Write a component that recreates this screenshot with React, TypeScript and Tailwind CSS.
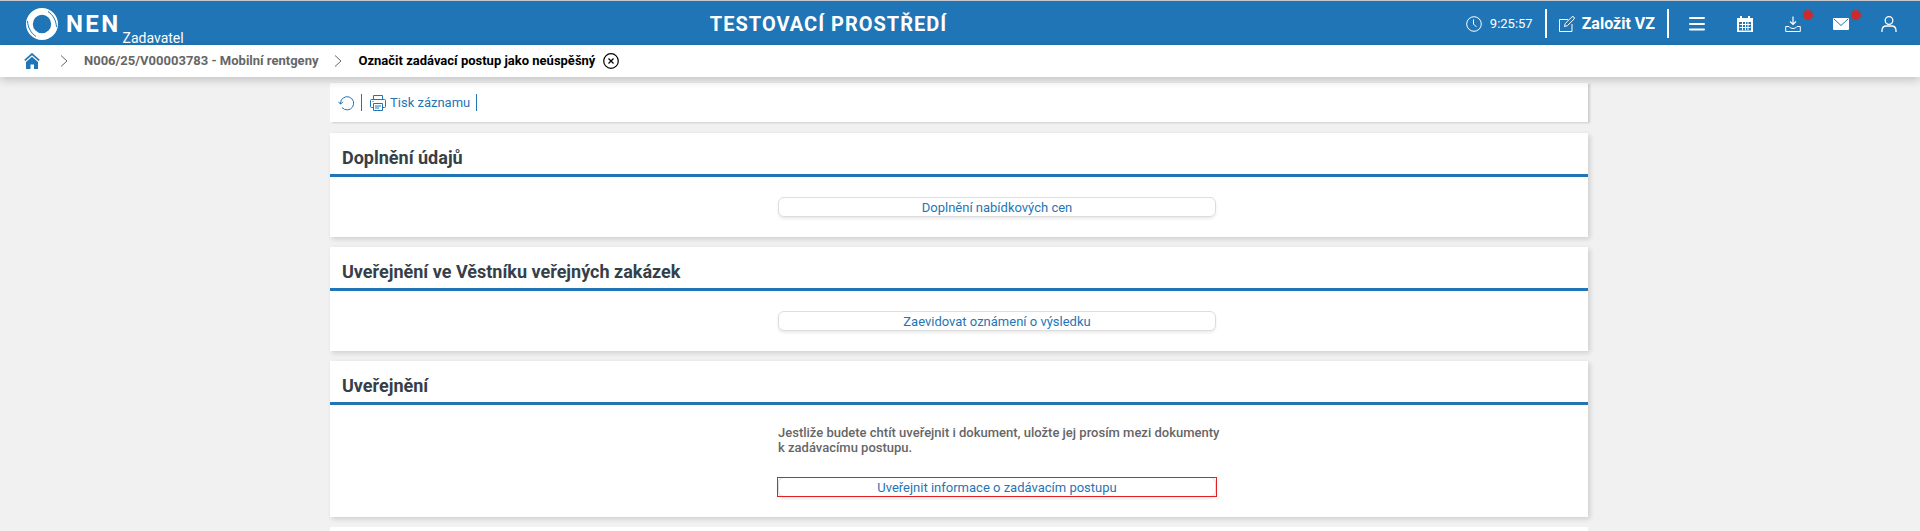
import React from 'react';

interface IconProps {
  className?: string;
}

function LogoIcon() {
  return (
    <svg viewBox="0 0 32 32" className="size-8" aria-hidden="true">
      <path
        fill="#fff"
        fillRule="evenodd"
        d="M16 0a16 16 0 1 1 0 32a16 16 0 0 1 0-32zM16 6.800a9.200 9.200 0 1 0 0 18.400a9.200 9.200 0 0 0 0-18.400z"
      />
      <path
        d="M22 3.500C27 7 30 12 30.500 19M10 28.500C5 25 2 20 1.500 13"
        fill="none"
        stroke="#1f75b5"
        strokeWidth="1"
      />
    </svg>
  );
}

function ClockIcon({ className }: IconProps) {
  return (
    <svg viewBox="0 0 16 16" className={className} fill="none" stroke="currentColor" aria-hidden="true">
      <circle cx="8" cy="8" r="7.300" />
      <path d="M7.500 3.500v4.500l3 3" />
    </svg>
  );
}

function EditIcon({ className }: IconProps) {
  return (
    <svg viewBox="0 0 16 16" className={className} fill="none" stroke="currentColor" aria-hidden="true">
      <path d="M9 3.500H.5v12h12.500V8" />
      <path d="M5.500 10.500l.7-3L13 .8q1-.6 1.900.3q.9.900.2 1.900L8.400 9.700z" />
    </svg>
  );
}

function MenuIcon({ className }: IconProps) {
  return (
    <svg viewBox="0 0 16 16" className={className} fill="none" stroke="currentColor" strokeWidth="2" strokeLinecap="round" aria-hidden="true">
      <path d="M1 2h14M1 8h14M1 13.500h14" />
    </svg>
  );
}

function CalendarIcon({ className }: IconProps) {
  return (
    <svg viewBox="0 0 16 16" className={className} fill="currentColor" aria-hidden="true">
      <path
        fillRule="evenodd"
        d="M0 2h3V0h2v2h6V0h2v2h3v14H0zM2 6v8.500h12V6z"
      />
      <path d="M5.500 6v8M8.500 6v8M11 6v8M2.500 8.500h11M2.500 11.500h11" stroke="currentColor" fill="none" />
    </svg>
  );
}

function DownloadIcon({ className }: IconProps) {
  return (
    <svg viewBox="0 0 16 16" className={className} fill="none" stroke="currentColor" aria-hidden="true">
      <path d="M8 .5v8M5 5.500l3 3l3-3" strokeWidth="1.200" />
      <path d="M4 10.500H.7v5h14.600v-5H12q-1 2-4 2t-4-2z" />
    </svg>
  );
}

function MailIcon({ className }: IconProps) {
  return (
    <svg viewBox="0 0 16 16" className={className} aria-hidden="true">
      <rect y="2" width="16" height="12" rx="1" fill="currentColor" />
      <path d="M1 3l7 6.500L15 3" fill="none" stroke="#1f75b5" />
    </svg>
  );
}

function UserIcon({ className }: IconProps) {
  return (
    <svg viewBox="0 0 16 16" className={className} fill="none" stroke="currentColor" strokeWidth="1.300" aria-hidden="true">
      <circle cx="8" cy="4.500" r="3.800" />
      <path d="M1 16v-1.500q0-4.500 4.500-4.500h5q4.500 0 4.500 4.500V16" />
    </svg>
  );
}

function HomeIcon({ className }: IconProps) {
  return (
    <svg viewBox="0 0 16 16" className={className} aria-hidden="true">
      <path d="M.8 7.300L8 1l7.200 6.300" fill="none" stroke="currentColor" strokeWidth="1.700" />
      <path d="M2 9l6-5.200L14 9v7h-4v-4.500H6.500V16H2z" fill="currentColor" />
    </svg>
  );
}

function ChevronIcon({ className }: IconProps) {
  return (
    <svg viewBox="0 0 8 12" className={className} fill="none" stroke="currentColor" aria-hidden="true">
      <path d="M1 .5L7 6l-6 5.500" />
    </svg>
  );
}

function CloseIcon({ className }: IconProps) {
  return (
    <svg viewBox="0 0 16 16" className={className} fill="none" stroke="currentColor" strokeWidth="1.200" aria-hidden="true">
      <circle cx="8" cy="8" r="7.300" />
      <path d="M5.500 5.500l5 5M10.500 5.500l-5 5" />
    </svg>
  );
}

function RefreshIcon({ className }: IconProps) {
  return (
    <svg viewBox="0 0 16 16" className={className} fill="none" stroke="currentColor" aria-hidden="true">
      <path d="M2.500 9V8a6.600 6.600 0 1 1 1.500 4.500M.3 6.800L2.600 9.200l2.300-2.400" />
    </svg>
  );
}

function PrinterIcon({ className }: IconProps) {
  return (
    <svg viewBox="0 0 16 16" className={className} fill="none" stroke="currentColor" aria-hidden="true">
      <path d="M3.500 4.500v-4h9v4M3.500 12.500h-2q-1 0-1-1v-6q0-1 1-1h13q1 0 1 1v6q0 1-1 1h-2" />
      <path d="M3.500 8.500h9v7h-9zM5 11h6M5 13h4M2.500 6.500h1" />
    </svg>
  );
}

const headerItems = [
  { label: 'Menu', Icon: MenuIcon, alert: false },
  { label: 'Kalendář', Icon: CalendarIcon, alert: false },
  { label: 'Stažené soubory', Icon: DownloadIcon, alert: true },
  { label: 'Zprávy', Icon: MailIcon, alert: true },
  { label: 'Uživatel', Icon: UserIcon, alert: false },
];

function Header() {
  return (
    <header className="grid h-[45px] grid-cols-[1fr_auto_1fr] items-center border-t border-[#c4c8cc] bg-[#1f75b5] pt-px pr-[23px] pl-[26px] text-white">
      <a href="#" className="flex items-center gap-2">
        <LogoIcon />
        <span className="flex items-end gap-0.5">
          <span className="text-2xl leading-8 font-bold tracking-widest">NEN</span>
          <span className="-mb-2 text-sm">Zadavatel</span>
        </span>
      </a>
      <div className="pr-[266px] text-xl font-bold tracking-wider">TESTOVACÍ PROSTŘEDÍ</div>
      <div className="flex items-center justify-end">
        <ClockIcon className="mr-2 size-4" />
        <time className="mr-3 text-[13px]">9:25:57</time>
        <div className="flex h-[29px] items-center border-x-2 border-white px-3">
          <button type="button" className="flex items-center gap-[7px] text-base font-bold">
            <EditIcon className="size-4" />
            Založit VZ
          </button>
        </div>
        <nav className="ml-5 flex gap-8">
          {headerItems.map(({ label, Icon, alert }) => (
            <button key={label} type="button" aria-label={label} className="relative">
              <Icon className="size-4" />
              {alert && <span className="absolute -top-1.5 -right-3 size-2.5 rounded-full bg-[#c92c2c]" />}
            </button>
          ))}
        </nav>
      </div>
    </header>
  );
}

function Breadcrumbs() {
  return (
    <nav className="relative flex h-8 items-center bg-white pl-6 text-[13px] font-bold shadow-[0_3px_10px_rgba(0,0,0,0.2)]">
      <a href="#" aria-label="Domů" className="text-[#1f75b5]">
        <HomeIcon className="size-4" />
      </a>
      <ChevronIcon className="mr-4 ml-5 h-3 w-2 text-[#666]" />
      <a href="#" className="text-[#666]">N006/25/V00003783 - Mobilní rentgeny</a>
      <ChevronIcon className="mx-4 h-3 w-2 text-[#666]" />
      <span className="text-black">Označit zadávací postup jako neúspěšný</span>
      <button type="button" aria-label="Zavřít" className="ml-2">
        <CloseIcon className="size-4" />
      </button>
    </nav>
  );
}

function Section({ title, children }: { title: string; children: React.ReactNode }) {
  return (
    <section className="bg-white shadow-[2px_2px_5px_rgba(0,0,0,0.15)]">
      <h2 className="border-b-3 border-[#1f75b5] px-3 pt-[13px] pb-1 text-lg leading-6 font-bold text-[#363f48]">
        {title}
      </h2>
      <div className="grid grid-cols-[minmax(0,448fr)_minmax(0,438fr)_minmax(0,372fr)] py-5">
        <div className="col-start-2 flex flex-col gap-[22px]">{children}</div>
      </div>
    </section>
  );
}

function ActionButton({ children, marked = false }: { children: React.ReactNode; marked?: boolean }) {
  return (
    <button
      type="button"
      className="relative h-5 w-full rounded-md border border-[#ddd] bg-white pt-0.5 text-[13px] leading-4 text-[#1f75b5] shadow-[0_2px_3px_rgba(0,0,0,0.08)]"
    >
      {children}
      {marked && <span className="absolute -inset-x-0.5 -inset-y-px border border-[#e02028]" />}
    </button>
  );
}

export default function App() {
  return (
    <div className="flex min-h-screen flex-col bg-[#f1f1f1] font-['Roboto',sans-serif]">
      <Header />
      <Breadcrumbs />
      <div className="flex flex-1 justify-center pt-1.5 pr-0.5">
        <main className="flex w-full max-w-[1258px] flex-col gap-2.5">
          <div className="mb-px flex h-[39px] items-center bg-white px-2 text-[13px] text-[#1f75b5] shadow-[2px_1px_2px_rgba(0,0,0,0.15)]">
            <button type="button" aria-label="Obnovit" className="mr-[7px]">
              <RefreshIcon className="size-4" />
            </button>
            <div className="flex h-[17px] items-center border-x border-[#1f75b5] pr-1.5 pl-2">
              <button type="button" className="flex items-center gap-1">
                <PrinterIcon className="size-4" />
                Tisk záznamu
              </button>
            </div>
          </div>

          <Section title="Doplnění údajů">
            <ActionButton>Doplnění nabídkových cen</ActionButton>
          </Section>

          <Section title="Uveřejnění ve Věstníku veřejných zakázek">
            <ActionButton>Zaevidovat oznámení o výsledku</ActionButton>
          </Section>

          <Section title="Uveřejnění">
            <p className="text-[13px] leading-[15px] font-medium whitespace-nowrap text-[#666]">
              Jestliže budete chtít uveřejnit i dokument, uložte jej prosím mezi dokumenty
              <br />
              k zadávacímu postupu.
            </p>
            <ActionButton marked>Uveřejnit informace o zadávacím postupu</ActionButton>
          </Section>

          <section className="flex-1 bg-white" />
        </main>
      </div>
    </div>
  );
}
